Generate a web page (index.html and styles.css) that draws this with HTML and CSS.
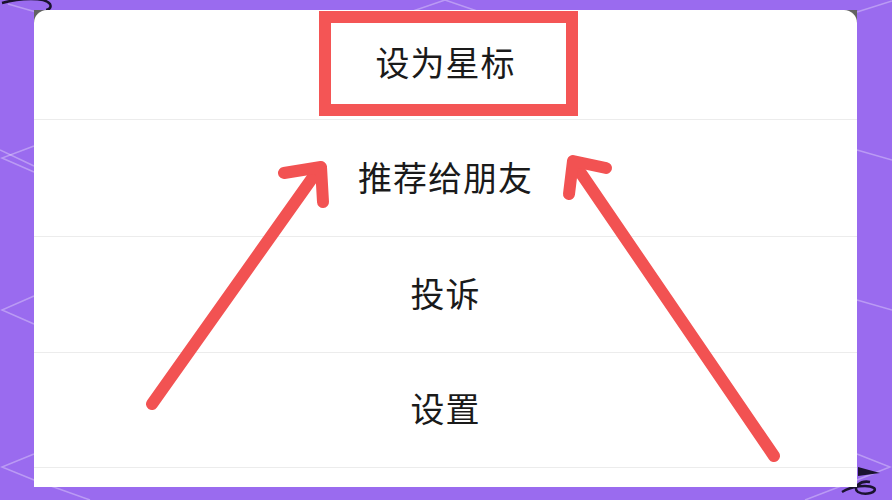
FILE: index.html
```html
<!DOCTYPE html>
<html lang="zh-CN">
<head>
<meta charset="utf-8">
<title>菜单</title>
<link rel="stylesheet" href="styles.css">
</head>
<body>
<div class="stage">
  <svg class="bg-lines" width="892" height="500" viewBox="0 0 892 500">
    <g stroke="rgba(255,255,255,0.32)" stroke-width="1.5" fill="none">
      <polyline points="8,4 36,12"/>
      <polyline points="410,12 445,0 480,12"/>
      <polyline points="857,12 892,1"/>
      <polyline points="0,150 34,166"/>
      <polyline points="34,146 2,158 34,172"/>
      <polyline points="34,296 2,310 34,324"/>
      <polyline points="34,454 2,467 34,480"/>
      <polyline points="34,480 90,500"/>
      <polyline points="857,454 890,467 857,480"/>
      <polyline points="857,480 805,500"/>
      <polyline points="857,150 892,160"/>
      <polyline points="857,300 892,310"/>
    </g>
    <path d="M2 3 C 20 -2, 45 -3, 50 4 C 52 8, 48 10, 46 10" stroke="#1b1330" stroke-width="2.5" fill="none"/>
    <path d="M858 467 L 880 473 L 858 476 Z" fill="#1b1330"/>
    <path d="M842 492 C 852 486, 868 484, 874 488 C 878 492, 866 496, 858 492 C 852 488, 860 480, 870 482" stroke="#1b1330" stroke-width="2.5" fill="none"/>
  </svg>

  <div class="sheet-frame">
    <div class="sheet">
      <div class="item item-first"><span class="label">设为星标</span></div>
      <div class="item item-mid"><span class="label">推荐给朋友</span></div>
      <div class="item item-third"><span class="label">投诉</span></div>
      <div class="item item-fourth"><span class="label">设置</span></div>
      <div class="item-tail"></div>
    </div>
  </div>

  <div class="highlight-box"></div>

  <svg class="arrows" width="892" height="500" viewBox="0 0 892 500">
    <g stroke="#f25252" stroke-width="12" stroke-linecap="round" stroke-linejoin="round" fill="none">
      <line x1="152" y1="404" x2="318" y2="170"/>
      <polyline points="284,173 321,167 323,202"/>
      <line x1="774" y1="456" x2="576" y2="166"/>
      <polyline points="606,168 573,161 569,194"/>
    </g>
  </svg>
</div>
</body>
</html>
```
FILE: styles.css
```css
* {
  box-sizing: border-box;
}

html, body {
  margin: 0;
  padding: 0;
}

body {
  width: 892px;
  height: 500px;
  overflow: hidden;
  background: #9a6bef;
  font-family: "Noto Sans CJK SC", "Noto Sans", sans-serif;
}

.stage {
  position: relative;
  width: 892px;
  height: 500px;
  padding: 10px 35px 13px 34px;
}

.bg-lines {
  position: absolute;
  left: 0;
  top: 0;
}

.arrows {
  position: absolute;
  left: 0;
  top: 0;
  pointer-events: none;
}

.sheet-frame {
  position: relative;
  width: 823px;
  height: 477px;
  background: linear-gradient(#626262 0, #626262 16px, transparent 16px);
}

.sheet {
  display: flex;
  flex-direction: column;
  height: 100%;
  background: #ffffff;
  border-radius: 13px 13px 0 0;
  overflow: hidden;
}

.item {
  display: flex;
  align-items: center;
  justify-content: center;
  border-bottom: 1px solid #ececec;
}

.item-first {
  height: 110px;
  padding-bottom: 5px;
}

.item-mid {
  height: 117px;
  padding-bottom: 3px;
}

.item-third {
  height: 116px;
  padding-bottom: 3px;
}

.item-fourth {
  height: 115px;
  padding-bottom: 4px;
}

.item-tail {
  flex: 1;
}

.label {
  font-size: 34px;
  line-height: 1;
  color: #1a1a1a;
  letter-spacing: 1px;
}

.highlight-box {
  position: absolute;
  left: 319px;
  top: 11px;
  width: 259px;
  height: 105px;
  border: 12px solid #f45555;
}
```
